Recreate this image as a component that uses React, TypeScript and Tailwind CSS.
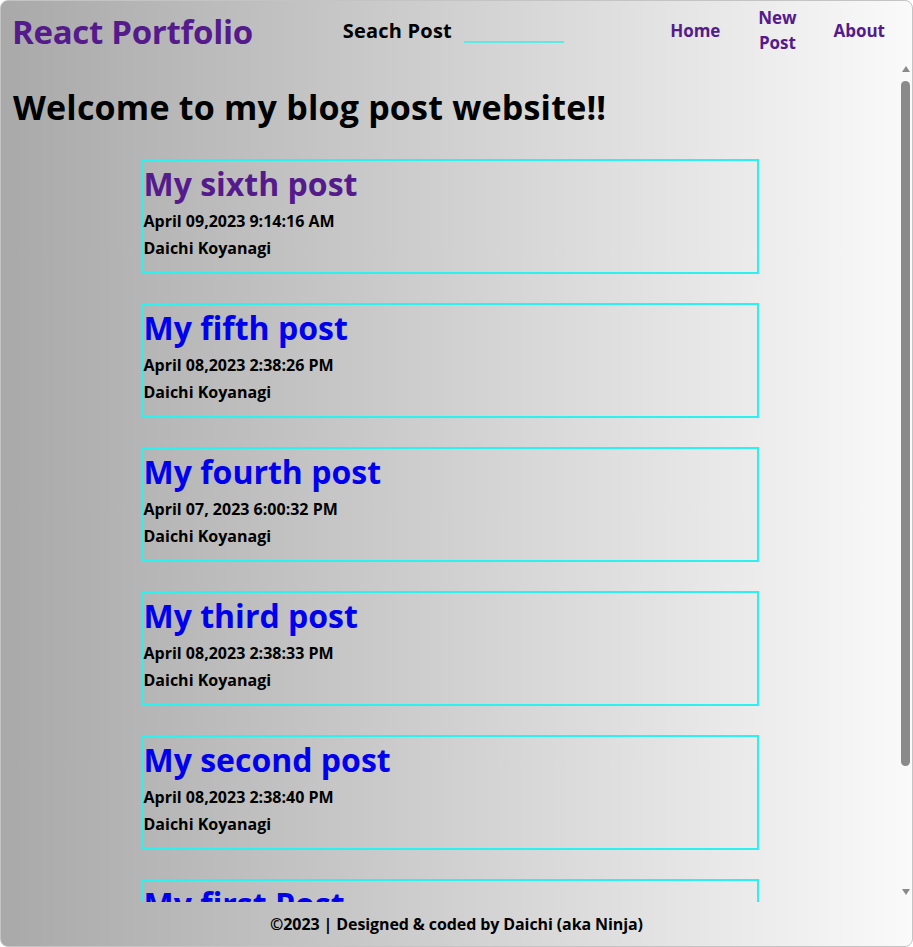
const posts = [
  { title: 'My sixth post', date: 'April 09,2023 9:14:16 AM', visited: true },
  { title: 'My fifth post', date: 'April 08,2023 2:38:26 PM' },
  { title: 'My fourth post', date: 'April 07, 2023 6:00:32 PM' },
  { title: 'My third post', date: 'April 08,2023 2:38:33 PM' },
  { title: 'My second post', date: 'April 08,2023 2:38:40 PM' },
  { title: 'My first Post', date: 'April 08,2023 2:38:46 PM' },
];

function PostCard({ title, date, visited }: { title: string; date: string; visited?: boolean }) {
  return (
    <div className="w-[617px] mx-auto border-2 border-[#2ef0ee] pb-[12px]">
      <a
        href="#"
        className={
          visited
            ? 'block mt-[2px] text-[32px] leading-[42px] font-bold text-[#551a8b]'
            : 'block mt-[2px] text-[32px] leading-[42px] font-bold text-[#0000ee]'
        }
      >
        {title}
      </a>
      <p className="mt-[4px] text-[16px] leading-[24px] font-bold text-black">{date}</p>
      <p className="mt-[3px] text-[16px] leading-[24px] font-bold text-black">Daichi Koyanagi</p>
    </div>
  );
}

function ScrollTrack() {
  // stand-in for the browser's scrollbar
  return (
    <div className="w-[13px] shrink-0 flex flex-col items-center pt-[4px] pb-[6px]">
      <svg width="10" height="8" viewBox="0 0 10 8" className="shrink-0">
        <path d="M5 1L9 7H1z" fill="#8a8a8a" />
      </svg>
      <div className="mt-[8px] w-[9px] h-[685px] rounded-full bg-[#8a8a8a]" />
      <div className="flex-1" />
      <svg width="10" height="8" viewBox="0 0 10 8" className="shrink-0">
        <path d="M5 7L9 1H1z" fill="#8a8a8a" />
      </svg>
    </div>
  );
}

export default function App() {
  return (
    <div className="h-screen w-full flex flex-col overflow-hidden rounded-lg border border-[#c4c4c4] bg-gradient-to-r from-[#a9a9a9] to-[#fafafa] font-['Open_Sans','Noto_Sans',sans-serif]">
      {/* Header */}
      <header className="h-[60px] shrink-0 flex items-center pl-[11px] pr-[27px]">
        <h1 className="text-[33px] font-bold text-[#551a8b] leading-none tracking-[-0.3px]">React Portfolio</h1>
        <div className="ml-[90px] flex items-center">
          <label className="text-[20px] font-bold text-black tracking-[0.2px]">Seach Post</label>
          <input
            type="text"
            className="ml-[12px] w-[100px] h-[24px] mt-[-1px] bg-transparent border-0 border-b-2 border-[#5ee8e6] outline-none"
          />
        </div>
        <nav className="ml-auto mt-[-2px] flex items-center text-[17px] font-bold text-[#551a8b]">
          <a href="#" className="leading-[25px]">Home</a>
          <a href="#" className="ml-[37px] w-[40px] text-center leading-[25px]">
            New Post
          </a>
          <a href="#" className="ml-[36px] leading-[25px]">About</a>
        </nav>
      </header>

      {/* Posts */}
      <div className="flex-1 min-h-0 flex">
        <main className="flex-1 min-w-0 overflow-hidden">
          <h2 className="pl-[12px] pt-[23px] text-[34px] leading-[46px] font-bold text-black tracking-[0.2px]">
            Welcome to my blog post website!!
          </h2>
          <div className="mt-[29px] flex flex-col gap-[29px] pb-[30px]">
            {posts.map((p) => (
              <PostCard key={p.title} {...p} />
            ))}
          </div>
        </main>
        <ScrollTrack />
      </div>

      {/* Footer */}
      <footer className="h-[44px] shrink-0 flex items-center justify-center text-[16px] font-bold text-black tracking-[-0.1px]">
        ©2023 | Designed &amp; coded by Daichi (aka Ninja)
      </footer>
    </div>
  );
}
